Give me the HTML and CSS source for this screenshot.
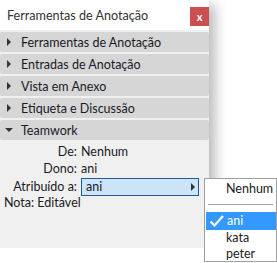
FILE: index.html
```html
<!DOCTYPE html>
<html lang="pt">
<head>
    <meta charset="UTF-8">
    <title>Ferramentas de Anotação</title>
    <link rel="stylesheet" href="styles.css">
</head>
<body>

    <div id="panel">
        <div class="head">
            <span class="title">Ferramentas de Anotação</span>
            <span class="close">x</span>
        </div>

        <!-- secções -->
        <div class="sec"><span class="arrow"></span>Ferramentas de Anotação</div>
        <div class="sec"><span class="arrow"></span>Entradas de Anotação</div>
        <div class="sec"><span class="arrow"></span>Vista em Anexo</div>
        <div class="sec"><span class="arrow"></span>Etiqueta e Discussão</div>
        <div class="sec"><span class="arrow open"></span>Teamwork</div>

        <div class="team">
            <div class="line"><span class="lbl">De:</span><span>Nenhum</span></div>
            <div class="line"><span class="lbl">Dono:</span><span>ani</span></div>
            <div class="line sel"><span class="lbl">Atribuído a:</span>
                <div class="pick">ani<span class="pick-arrow"></span></div>
            </div>
            <div class="note">Nota: Editável</div>
        </div>
    </div>

    <!-- menu aberto -->
    <div id="menu">
        <div class="item">Nenhum</div>
        <div class="sep"></div>
        <div class="item on"><svg class="check" width="16" height="14" viewBox="0 0 16 14"><path d="M1.5 7.5 L5.5 11.5 L14 2" fill="none" stroke="#fff" stroke-width="2.2"/></svg>ani</div>
        <div class="item">kata</div>
        <div class="item">peter</div>
    </div>

</body>
</html>
```

FILE: styles.css
```css
* {
    margin: 0;
    padding: 0;
    box-sizing: border-box;
}

body {
    background-color: #fff;
    font-family: "Lato", "Noto Sans", sans-serif;
    font-size: 12.5px;
    color: #1a1a26;
}

#panel {
    width: 209px;
    height: 248px;
    background-color: #f0f0f0;
    box-shadow: 6px 5px 12px rgba(0, 0, 0, 0.28);
}

.head {
    height: 30px;
    background-color: #fff;
    display: flex;
    align-items: center;
    justify-content: space-between;
    padding-left: 7px;
    margin-bottom: 2px;
}

.title {
    font-size: 12.6px;
    color: #333;
}

.close {
    width: 19px;
    height: 19px;
    margin-top: 2px;
    background-color: #c9504f;
    color: #fff;
    font-weight: bold;
    font-size: 11px;
    display: flex;
    align-items: center;
    justify-content: center;
}

.sec {
    height: 20px;
    margin-bottom: 2px;
    background-color: #d6d6d6;
    border-radius: 2px;
    display: flex;
    align-items: center;
    padding-left: 7px;
}

.arrow {
    width: 0;
    height: 0;
    border-top: 4px solid transparent;
    border-bottom: 4px solid transparent;
    border-left: 4px solid #333;
    margin-right: 10px;
}

.arrow.open {
    border-left: 4px solid transparent;
    border-right: 4px solid transparent;
    border-top: 4px solid #333;
    border-bottom: 0;
    margin-left: -2px;
    margin-right: 8px;
}

.team {
    padding-top: 1px;
}

.line {
    display: flex;
    align-items: center;
    height: 17px;
}

.line.sel {
    height: 19px;
}

.lbl {
    width: 81px;
    text-align: right;
    padding-right: 4px;
}

.pick {
    width: 118px;
    height: 18px;
    border: 1px solid #1e5a99;
    background-color: #cce4f7;
    display: flex;
    align-items: center;
    justify-content: space-between;
    padding-left: 4px;
    padding-right: 3px;
}

.pick-arrow {
    width: 0;
    height: 0;
    border-top: 4px solid transparent;
    border-bottom: 4px solid transparent;
    border-left: 4px solid #333;
}

.note {
    padding-left: 4px;
    height: 14px;
    line-height: 14px;
}

#menu {
    position: absolute;
    left: 204px;
    top: 178px;
    width: 73px;
    height: 84px;
    background-color: #fff;
    border: 1px solid #a0a0a0;
    padding-top: 2px;
}

.item {
    height: 16px;
    line-height: 16px;
    padding-left: 21px;
    display: flex;
    align-items: center;
}

.item.on {
    background-color: #3399ff;
    color: #fff;
    padding-left: 3px;
    margin: 0 0 0 1px;
    height: 18px;
}

.check {
    margin-right: 2px;
}

.sep {
    height: 1px;
    background-color: #a0a0a0;
    margin: 7px 3px 7px 3px;
}
```
